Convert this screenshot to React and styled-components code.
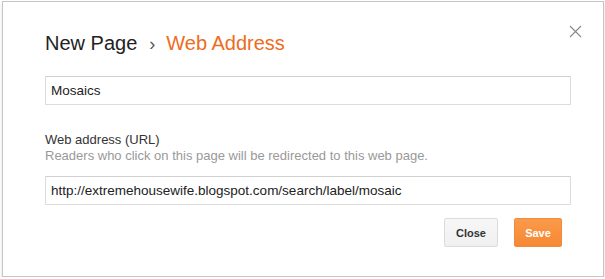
import React from "react";
import styled, { createGlobalStyle } from "styled-components";

const Global = createGlobalStyle`
  html, body { margin: 0; padding: 0; background: #fff; }
  body { font-family: "Liberation Sans", Arial, sans-serif; }
`;

const Dialog = styled.div`
  position: relative;
  box-sizing: border-box;
  width: 602px;
  height: 276px;
  margin: 1px 0 0 2px;
  border: 1px solid #c6c6c6;
  box-shadow: 0 2px 3px rgba(0, 0, 0, 0.15);
  background: #fff;
  padding: 29px 32px 0 42px;
`;

const Title = styled.h1`
  margin: 0;
  font-weight: normal;
  font-size: 20px;
  line-height: 24px;
  color: #222;
  display: flex;
  align-items: baseline;
`;

const Sep = styled.span`
  color: #555;
  font-size: 18px;
  margin: 0 11px 0 12px;
`;

const Current = styled.span`
  color: #ee6c1d;
`;

const CloseX = styled.button`
  position: absolute;
  top: 23px;
  right: 21px;
  width: 13px;
  height: 13px;
  padding: 0;
  border: 0;
  background: none;
  cursor: pointer;
  display: flex;
`;

const Input = styled.input`
  display: block;
  box-sizing: border-box;
  width: 526px;
  height: 29px;
  border: 1px solid #dcdcdc;
  border-top-color: #d0d0d0;
  padding: 0 5px;
  font-family: "Liberation Sans", Arial, sans-serif;
  font-size: 13.5px;
  color: #222;
  outline: none;
  margin-top: ${(p) => p.$mt}px;
`;

const Label = styled.div`
  margin-top: 27px;
  font-size: 13px;
  line-height: 16px;
  color: #333;
`;

const Help = styled.div`
  font-size: 13px;
  line-height: 16px;
  color: #999;
`;

const Actions = styled.div`
  display: flex;
  justify-content: flex-end;
  gap: 16px;
  width: 517px;
  margin-top: 13px;
`;

const Button = styled.button`
  box-sizing: border-box;
  height: 29px;
  width: ${(p) => p.$w}px;
  padding: 0;
  border-radius: 2px;
  font-family: "Liberation Sans", Arial, sans-serif;
  font-size: 11px;
  font-weight: bold;
  border: 1px solid ${(p) => (p.$primary ? "#f08a3e" : "#dcdcdc")};
  background: ${(p) =>
    p.$primary
      ? "linear-gradient(#fb9a4a, #f68834)"
      : "linear-gradient(#f7f7f7, #f0f0f0)"};
  color: ${(p) => (p.$primary ? "#fff" : "#333")};
  cursor: pointer;
`;

export default function App() {
  return (
    <>
      <Global />
      <Dialog>
        <Title>
          <span>New Page</span>
          <Sep>›</Sep>
          <Current>Web Address</Current>
        </Title>
        <CloseX aria-label="Close">
          <svg width="13" height="13" viewBox="0 0 13 13">
            <path d="M1 1 L12 12 M12 1 L1 12" stroke="#888" strokeWidth="1.1" fill="none" />
          </svg>
        </CloseX>
        <Input $mt={20} defaultValue="Mosaics" />
        <Label>Web address (URL)</Label>
        <Help>Readers who click on this page will be redirected to this web page.</Help>
        <Input $mt={12} defaultValue="http://extremehousewife.blogspot.com/search/label/mosaic" />
        <Actions>
          <Button $w={54}>Close</Button>
          <Button $w={48} $primary>Save</Button>
        </Actions>
      </Dialog>
    </>
  );
}
